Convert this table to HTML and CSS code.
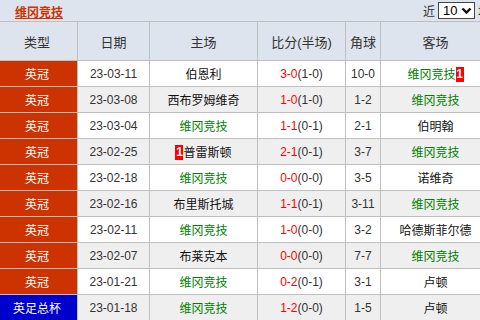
FILE: index.html
```html
<!DOCTYPE html>
<html>
<head>
<meta charset="utf-8">
<link rel="stylesheet" href="styles.css">
</head>
<body>
<div class="page">
  <div class="topbar">
    <a class="title">维冈竞技</a>
    <div class="recent">
      <span>近</span>
      <span class="select"><span class="val">10</span><svg width="11" height="8" viewBox="0 0 11 8"><path d="M1.5 1.5 L5.5 5.5 L9.5 1.5" fill="none" stroke="#111" stroke-width="2.4"/></svg></span>
      <span>场</span>
    </div>
  </div>
  <table class="games">
    <colgroup>
      <col class="c1"><col class="c2"><col class="c3"><col class="c4"><col class="c5"><col class="c6">
    </colgroup>
    <thead>
      <tr><th>类型</th><th>日期</th><th>主场</th><th>比分(半场)</th><th>角球</th><th>客场</th></tr>
    </thead>
    <tbody>
      <tr><td class="lg">英冠</td><td>23-03-11</td><td class="tm">伯恩利</td><td><span class="sc">3-0</span>(1-0)</td><td>10-0</td><td class="tm wig">维冈竞技<span class="rc">1</span></td></tr>
      <tr class="alt"><td class="lg">英冠</td><td>23-03-08</td><td class="tm">西布罗姆维奇</td><td><span class="sc">1-0</span>(1-0)</td><td>1-2</td><td class="tm wig">维冈竞技</td></tr>
      <tr><td class="lg">英冠</td><td>23-03-04</td><td class="tm wig">维冈竞技</td><td><span class="sc">1-1</span>(0-1)</td><td>2-1</td><td class="tm">伯明翰</td></tr>
      <tr class="alt"><td class="lg">英冠</td><td>23-02-25</td><td class="tm"><span class="rc">1</span>普雷斯顿</td><td><span class="sc">2-1</span>(0-1)</td><td>3-7</td><td class="tm wig">维冈竞技</td></tr>
      <tr><td class="lg">英冠</td><td>23-02-18</td><td class="tm wig">维冈竞技</td><td><span class="sc">0-0</span>(0-0)</td><td>3-5</td><td class="tm">诺维奇</td></tr>
      <tr class="alt"><td class="lg">英冠</td><td>23-02-16</td><td class="tm">布里斯托城</td><td><span class="sc">1-1</span>(0-1)</td><td>3-11</td><td class="tm wig">维冈竞技</td></tr>
      <tr><td class="lg">英冠</td><td>23-02-11</td><td class="tm wig">维冈竞技</td><td><span class="sc">1-0</span>(0-0)</td><td>3-2</td><td class="tm">哈德斯菲尔德</td></tr>
      <tr class="alt"><td class="lg">英冠</td><td>23-02-07</td><td class="tm">布莱克本</td><td><span class="sc">0-0</span>(0-0)</td><td>7-7</td><td class="tm wig">维冈竞技</td></tr>
      <tr><td class="lg">英冠</td><td>23-01-21</td><td class="tm wig">维冈竞技</td><td><span class="sc">0-2</span>(0-1)</td><td>3-1</td><td class="tm">卢顿</td></tr>
      <tr class="alt"><td class="lg cup">英足总杯</td><td>23-01-18</td><td class="tm wig">维冈竞技</td><td><span class="sc">1-2</span>(0-0)</td><td>1-5</td><td class="tm">卢顿</td></tr>
    </tbody>
  </table>
</div>
</body>
</html>
```

FILE: styles.css
```css
html, body {
  margin: 0;
  padding: 0;
  overflow: hidden;
  background: #ffffff;
}
body {
  font-family: "Liberation Sans", "Noto Sans CJK SC", sans-serif;
  font-size: 12px;
  color: #333333;
}
.page {
  width: 494px;
  margin-left: -4px;
  background: #dde4ee;
}
.topbar {
  height: 21px;
  display: flex;
  align-items: center;
  justify-content: space-between;
  padding: 0 0 0 19px;
  box-sizing: border-box;
}
.title {
  color: #cc3300;
  font-weight: bold;
  font-size: 12px;
  text-decoration: underline;
  margin-top: 2px;
}
.recent {
  display: flex;
  align-items: center;
  gap: 3px;
  font-size: 12px;
  color: #333;
}
.select {
  display: inline-flex;
  align-items: center;
  justify-content: space-between;
  width: 37px;
  height: 17px;
  box-sizing: border-box;
  border: 1px solid #444;
  background: #fff;
  padding: 0 2px 0 4px;
  font-size: 13px;
  color: #000;
}
.games {
  border-collapse: collapse;
  table-layout: fixed;
  width: 494px;
}
.c1 { width: 81px; }
.c2 { width: 72px; }
.c3 { width: 108px; }
.c4 { width: 88px; }
.c5 { width: 35px; }
.c6 { width: 110px; }
th, td {
  border: 1px solid #bfbfbf;
  text-align: center;
  padding: 0;
  white-space: nowrap;
}
th {
  height: 38px;
  font-weight: normal;
  font-size: 13px;
  color: #333;
  background: #dde4ee;
}
td {
  height: 25px;
  background: #ffffff;
}
tr.alt td {
  background: #efefef;
}
td.lg {
  background: #cc3300;
  color: #ffffff;
}
tr.alt td.lg { background: #cc3300; }
tr.alt td.lg.cup, td.lg.cup { background: #0000cc; }
td.tm { color: #111; }
td.tm.wig { color: #008000; }
.sc { color: #ff0000; }
.rc {
  display: inline-block;
  background: #ff0000;
  color: #ffffff;
  font-weight: bold;
  font-size: 12px;
  width: 8px;
  height: 15px;
  line-height: 15px;
  vertical-align: middle;
  text-align: center;
  margin-top: -2px;
}
```
